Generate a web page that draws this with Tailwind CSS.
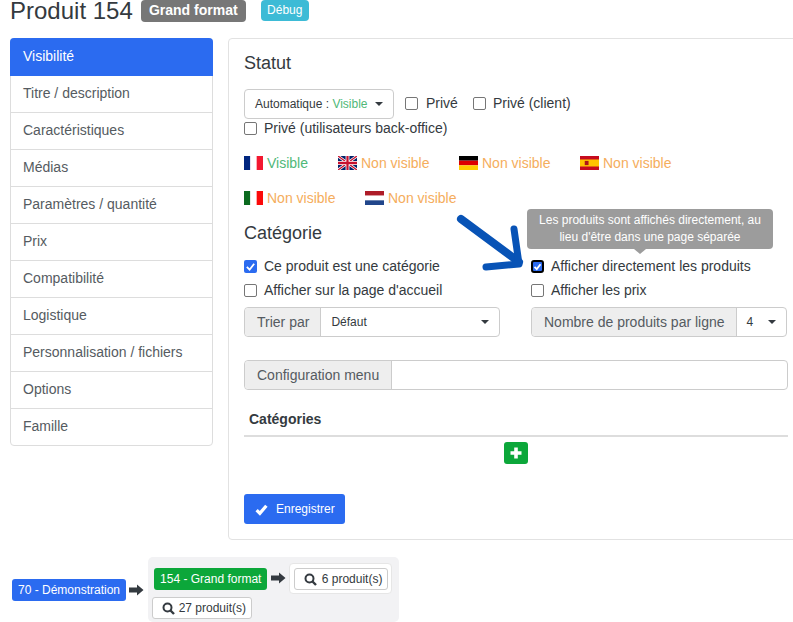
<!DOCTYPE html>
<html lang="fr">
<head>
    <meta charset="UTF-8">
    <title>Produit 154</title>
    <script src="https://cdn.jsdelivr.net/npm/@tailwindcss/browser@4"></script>
</head>
<body class="bg-white">
<div class="relative w-[793px] h-[622px] overflow-hidden font-['Liberation_Sans',Arial,sans-serif] text-[14px] text-[#343a40]">

    <!-- Title -->
    <div class="flex items-start h-[38px] pl-[10px]">
        <h1 class="text-[24px] leading-[21px] text-[#343a40]">Produit 154</h1>
        <span class="ml-[8px] h-[22px] w-[105px] text-center rounded-[4px] bg-[#777777] text-white font-bold text-[14px] leading-[21px]">Grand format</span>
        <span class="ml-[15px] h-[21px] w-[48px] text-center rounded-[4px] bg-[#3dbbd6] text-white text-[12px] leading-[20px]">Débug</span>
    </div>

    <div class="flex items-start pl-[10px]">
        <!-- Sidebar -->
        <nav class="w-[203px] shrink-0 rounded-[4px] border border-[#dddddd] text-[14px] text-[#555b61]">
            <a class="block h-[38px] leading-[36px] -mx-px -mt-px pl-[13px] bg-[#2b6bf0] text-white rounded-t-[4px]">Visibilité</a>
            <a class="block h-[37px] leading-[35px] pl-[12px] border-b border-[#dddddd]">Titre / description</a>
            <a class="block h-[37px] leading-[35px] pl-[12px] border-b border-[#dddddd]">Caractéristiques</a>
            <a class="block h-[37px] leading-[35px] pl-[12px] border-b border-[#dddddd]">Médias</a>
            <a class="block h-[37px] leading-[35px] pl-[12px] border-b border-[#dddddd]">Paramètres / quantité</a>
            <a class="block h-[37px] leading-[35px] pl-[12px] border-b border-[#dddddd]">Prix</a>
            <a class="block h-[37px] leading-[35px] pl-[12px] border-b border-[#dddddd]">Compatibilité</a>
            <a class="block h-[37px] leading-[35px] pl-[12px] border-b border-[#dddddd]">Logistique</a>
            <a class="block h-[37px] leading-[35px] pl-[12px] border-b border-[#dddddd]">Personnalisation / fichiers</a>
            <a class="block h-[37px] leading-[35px] pl-[12px] border-b border-[#dddddd]">Options</a>
            <a class="block h-[36px] leading-[35px] pl-[12px]">Famille</a>
        </nav>

        <!-- Card -->
        <section class="ml-[15px] w-[600px] shrink-0 h-[502px] rounded-[4px] border border-[#e2e2e2] pl-[15px] pt-[14px]">
            <h2 class="text-[18px] leading-[20px] mb-[16px]">Statut</h2>

            <div class="flex items-center h-[29px]">
                <div class="flex items-center w-[150px] h-[30px] pl-[10px] rounded-[4px] border border-[#cccccc] text-[12px]">
                    Automatique :&nbsp;<span class="text-[#4fb878]">Visible</span>
                    <span class="ml-[7px] w-0 h-0 border-x-[4px] border-x-transparent border-t-[4px] border-t-[#343a40]"></span>
                </div>
                <label class="flex items-center ml-[11px]"><span class="w-[13px] h-[13px] rounded-[2px] border border-[#767676] mr-[8px]"></span>Privé</label>
                <label class="flex items-center ml-[15px]"><span class="w-[13px] h-[13px] rounded-[2px] border border-[#767676] mr-[7px]"></span>Privé (client)</label>
            </div>
            <label class="flex items-center h-[20px]"><span class="w-[13px] h-[13px] rounded-[2px] border border-[#767676] mr-[7px]"></span>Privé (utilisateurs back-office)</label>

            <div class="flex items-center h-[20px] mt-[15px]">
                <span class="flex items-center w-[94px]">
                    <svg class="w-[19px] h-[14px] mr-[4px]" viewBox="0 0 3 2" preserveAspectRatio="none"><rect width="1" height="2" fill="#00267f"/><rect x="1" width="1" height="2" fill="#fff"/><rect x="2" width="1" height="2" fill="#f31830"/></svg>
                    <span class="text-[#4fb878]">Visible</span>
                </span>
                <span class="flex items-center w-[121px]">
                    <svg class="w-[19px] h-[14px] mr-[4px]" viewBox="0 0 60 40" preserveAspectRatio="none"><rect width="60" height="40" fill="#012169"/><path d="M0 0L60 40M60 0L0 40" stroke="#fff" stroke-width="8"/><path d="M0 0L60 40M60 0L0 40" stroke="#c8102e" stroke-width="4"/><path d="M30 0V40M0 20H60" stroke="#fff" stroke-width="12"/><path d="M30 0V40M0 20H60" stroke="#c8102e" stroke-width="7"/></svg>
                    <span class="text-[#f5ad5c]">Non visible</span>
                </span>
                <span class="flex items-center w-[121px]">
                    <svg class="w-[19px] h-[14px] mr-[4px]" viewBox="0 0 3 3" preserveAspectRatio="none"><rect width="3" height="1" fill="#000"/><rect y="1" width="3" height="1" fill="#d00"/><rect y="2" width="3" height="1" fill="#ffce00"/></svg>
                    <span class="text-[#f5ad5c]">Non visible</span>
                </span>
                <span class="flex items-center">
                    <svg class="w-[19px] h-[14px] mr-[4px]" viewBox="0 0 12 8" preserveAspectRatio="none"><rect width="12" height="8" fill="#c60b1e"/><rect y="2" width="12" height="4" fill="#ffc400"/><rect x="3" y="2.8" width="2.4" height="2.4" fill="#ad1519"/></svg>
                    <span class="text-[#f5ad5c]">Non visible</span>
                </span>
            </div>
            <div class="flex items-center h-[20px] mt-[15px]">
                <span class="flex items-center w-[121px]">
                    <svg class="w-[19px] h-[14px] mr-[4px]" viewBox="0 0 3 2" preserveAspectRatio="none"><rect width="1" height="2" fill="#0b6a1f"/><rect x="1" width="1" height="2" fill="#fff"/><rect x="2" width="1" height="2" fill="#fb0a0a"/></svg>
                    <span class="text-[#f5ad5c]">Non visible</span>
                </span>
                <span class="flex items-center">
                    <svg class="w-[19px] h-[14px] mr-[4px]" viewBox="0 0 3 3" preserveAspectRatio="none"><rect width="3" height="1" fill="#ae1c28"/><rect y="1" width="3" height="1" fill="#fff"/><rect y="2" width="3" height="1" fill="#21468b"/></svg>
                    <span class="text-[#f5ad5c]">Non visible</span>
                </span>
            </div>

            <h2 class="text-[18px] leading-[20px] mt-[15px]">Catégorie</h2>

            <div class="grid grid-cols-[287px_1fr] mt-[11px]">
                <div>
                    <label class="flex items-center h-[24px]">
                        <span class="flex items-center justify-center w-[13px] h-[13px] rounded-[2px] bg-[#2b6bf0] mr-[7px]">
                            <svg class="w-[11px] h-[11px]" viewBox="0 0 12 12"><path d="M2 6.5L5 9.5L10 3" fill="none" stroke="#fff" stroke-width="2"/></svg>
                        </span>
                        Ce produit est une catégorie
                    </label>
                    <label class="flex items-center h-[24px]"><span class="w-[13px] h-[13px] rounded-[2px] border border-[#767676] mr-[7px]"></span>Afficher sur la page d'accueil</label>
                    <div class="flex items-stretch w-[256px] h-[30px] mt-[5px] rounded-[4px] border border-[#cccccc]">
                        <span class="flex items-center pl-[12px] pr-[11px] bg-[#eeeeee] border-r border-[#cccccc] rounded-l-[4px] text-[#555b61]">Trier par</span>
                        <span class="flex items-center flex-1 pl-[10px] text-[12px]">Défaut</span>
                        <span class="self-center mr-[10px] w-0 h-0 border-x-[4px] border-x-transparent border-t-[4px] border-t-[#343a40]"></span>
                    </div>
                </div>
                <div>
                    <label class="flex items-center h-[24px]">
                        <span class="flex items-center justify-center w-[13px] h-[13px] rounded-[3px] border-2 border-black bg-[#2b6bf0] mr-[7px]">
                            <svg class="w-[9px] h-[9px] shrink-0" viewBox="0 0 12 12"><path d="M2 6.5L5 9.5L10 3" fill="none" stroke="#fff" stroke-width="2.4"/></svg>
                        </span>
                        Afficher directement les produits
                    </label>
                    <label class="flex items-center h-[24px]"><span class="w-[13px] h-[13px] rounded-[2px] border border-[#767676] mr-[7px]"></span>Afficher les prix</label>
                    <div class="flex items-stretch w-[256px] h-[30px] mt-[5px] rounded-[4px] border border-[#cccccc]">
                        <span class="flex items-center pl-[12px] pr-[11px] bg-[#eeeeee] border-r border-[#cccccc] rounded-l-[4px] text-[#555b61]">Nombre de produits par ligne</span>
                        <span class="flex items-center flex-1 pl-[10px] text-[12px]">4</span>
                        <span class="self-center mr-[10px] w-0 h-0 border-x-[4px] border-x-transparent border-t-[4px] border-t-[#343a40]"></span>
                    </div>
                </div>
            </div>

            <div class="flex items-stretch w-[544px] h-[30px] mt-[23px] rounded-[4px] border border-[#cccccc]">
                <span class="flex items-center px-[12px] bg-[#eeeeee] border-r border-[#cccccc] rounded-l-[4px] text-[#555b61]">Configuration menu</span>
            </div>

            <div class="w-[544px] mt-[20px] h-[27px] border-b-2 border-[#dddddd] pl-[5px] font-bold leading-[18px]">Catégories</div>
            <div class="w-[544px] flex justify-center mt-[5px]">
                <span class="flex items-center justify-center w-[24px] h-[22px] rounded-[3px] bg-[#0ca73a]">
                    <svg class="w-[12px] h-[12px]" viewBox="0 0 12 12"><path d="M6 0.5V11.5M0.5 6H11.5" stroke="#fff" stroke-width="3.6"/></svg>
                </span>
            </div>
            <button class="flex items-center w-[101px] h-[30px] mt-[30px] pl-[11px] rounded-[3px] bg-[#2b6bf0] text-white text-[12px]">
                <svg class="w-[13px] h-[13px] mr-[8px]" viewBox="0 0 12 12"><path d="M1.5 6.5L4.5 9.5L10.5 2.5" fill="none" stroke="#fff" stroke-width="3"/></svg>
                Enregistrer
            </button>
        </section>
    </div>

    <!-- Tree -->
    <div class="flex items-center pl-[12px] mt-[17px] text-[12px]">
        <span class="flex items-center h-[22px] px-[6px] rounded-[3px] bg-[#2b6bf0] text-white">70 - Démonstration</span>
        <svg class="w-[15px] h-[12px] ml-[3px] mr-[4px]" viewBox="0 0 15 12"><path d="M0 3.5H8V0.5L14.5 6L8 11.5V8.5H0Z" fill="#343a40"/></svg>
        <div class="w-[251px] h-[65px] rounded-[5px] bg-[#f2f2f4] pl-[4px] pt-[6px]">
            <div class="flex items-start">
                <span class="flex items-center h-[22px] ml-[2px] mt-[5px] px-[6px] rounded-[3px] bg-[#0ca73a] text-white">154 - Grand format</span>
                <svg class="w-[15px] h-[12px] ml-[4px] mr-[3px] mt-[9px]" viewBox="0 0 15 12"><path d="M0 3.5H8V0.5L14.5 6L8 11.5V8.5H0Z" fill="#343a40"/></svg>
                <div class="w-[103px] h-[31px] rounded-[4px] bg-white pl-[4px] pt-[4px] border border-[#e6e6e6]">
                    <span class="flex items-center justify-end w-[94px] h-[22px] pr-[5px] rounded-[3px] border border-[#cccccc]">
                        <svg class="w-[13px] h-[13px] mr-[5px]" viewBox="0 0 13 13"><circle cx="5.5" cy="5.5" r="4" fill="none" stroke="#343a40" stroke-width="2"/><path d="M8.5 8.5L12 12" stroke="#343a40" stroke-width="2.4"/></svg>
                        6 produit(s)
                    </span>
                </div>
            </div>
            <span class="flex items-center justify-end w-[100px] h-[22px] mt-[3px] pr-[5px] rounded-[3px] border border-[#cccccc] bg-white">
                <svg class="w-[13px] h-[13px] mr-[4px]" viewBox="0 0 13 13"><circle cx="5.5" cy="5.5" r="4" fill="none" stroke="#343a40" stroke-width="2"/><path d="M8.5 8.5L12 12" stroke="#343a40" stroke-width="2.4"/></svg>
                27 produit(s)
            </span>
        </div>
    </div>

    <!-- Tooltip -->
    <div class="absolute left-[527px] top-[209px] w-[246px] h-[40px] px-[10px] pt-[3px] rounded-[4px] bg-[#9c9c9c] text-white text-[12px] leading-[17px] text-center">
        Les produits sont affichés directement, au lieu d'être dans une page séparée
        <span class="absolute left-[107px] top-[40px] w-0 h-0 border-x-[6px] border-x-transparent border-t-[5px] border-t-[#9c9c9c]"></span>
    </div>

    <!-- Arrow annotation -->
    <svg class="absolute left-[450px] top-[210px]" width="80" height="65" viewBox="0 0 80 65">
        <path d="M11 9L69 52" fill="none" stroke="#0853b6" stroke-width="8" stroke-linecap="round"/>
        <path d="M36 57L69 54L64 19" fill="none" stroke="#0853b6" stroke-width="7" stroke-linecap="round" stroke-linejoin="round"/>
    </svg>
</div>
</body>
</html>
